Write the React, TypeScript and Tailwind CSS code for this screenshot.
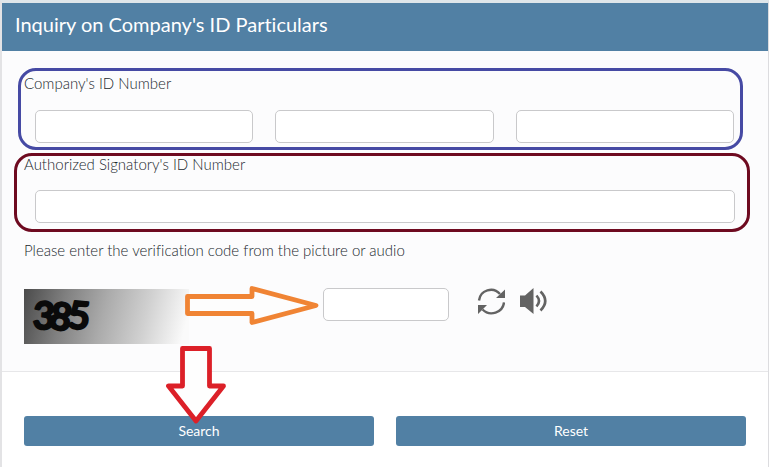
const inputClass = 'block h-[33px] w-full min-w-0 rounded-[5px] border border-[#c9c9cb] bg-white px-3 text-sm text-[#555b60] outline-none'
const labelClass = 'block text-[15px] font-light leading-5 text-[#22282d]'
const buttonClass = 'h-[30px] flex-1 rounded-[3px] bg-[#5180a4] pb-px text-sm leading-5 text-white cursor-pointer'

function CaptchaImage() {
  return (
    <svg viewBox="0 0 165 56" className="h-14 w-[165px] shrink-0" role="img" aria-label="Verification code">
      <defs>
        <linearGradient id="shade" gradientUnits="userSpaceOnUse" x1="0" y1="4" x2="160" y2="44">
          <stop offset="0" stopColor="#4c4c4c" />
          <stop offset="0.25" stopColor="#808080" />
          <stop offset="0.5" stopColor="#ababab" />
          <stop offset="0.75" stopColor="#d0d0d0" />
          <stop offset="1" stopColor="#fafafa" />
        </linearGradient>
      </defs>
      <rect y="1" width="165" height="55" fill="url(#shade)" />
      <g fontFamily="Lato, sans-serif" fontWeight="700" fontSize="38" stroke="#0a0a0a" strokeWidth="2" strokeLinejoin="round" fill="#0a0a0a">
        <text x="9" y="41" transform="rotate(3 19 28)">3</text>
        <text x="26" y="42" transform="rotate(12 37 28)">8</text>
        <text x="44" y="41" transform="rotate(5 55 28)">5</text>
      </g>
    </svg>
  )
}

function RefreshIcon() {
  return (
    <svg viewBox="0 0 28 28" className="size-7" aria-hidden="true">
      <path d="M2 12.5A12 12 0 0 1 23 6M27 14.5A12.500 12 0 0 1 5.500 21.5" fill="none" stroke="#636363" strokeWidth="2.4" />
      <path d="M28 1.500v8.500h-9zM1 26v-9h9z" fill="#636363" />
    </svg>
  )
}

function SpeakerIcon() {
  return (
    <svg viewBox="0 0 28 28" className="size-7" aria-hidden="true">
      <path d="M0 7.500h5L13.500 0v26L5 19H0z" fill="#636363" />
      <path d="M16.500 7.500Q21.500 13 16.500 18.500M20.500 3.500Q30 13 20.500 22.500" fill="none" stroke="#636363" strokeWidth="2.6" />
    </svg>
  )
}

export default function App() {
  return (
    <main className="relative min-h-screen border-t-[3px] border-r border-l-2 border-t-[#dfe6ea] border-r-[#dcdcdf] border-l-[#e3e3e5] bg-white font-[Lato,'Noto_Sans',sans-serif] [font-variant-ligatures:none]">
      <header className="flex h-12 items-center bg-[#5180a4] px-[13px] pb-1.5">
        <h1 className="text-xl leading-7 text-white">Inquiry on Company's ID Particulars</h1>
      </header>

      <form onSubmit={(e) => e.preventDefault()}>
        <div className="border-b border-[#e7e7e9] bg-[#fcfcfd] pt-[17px] pb-[27px]">
          <div role="group" aria-labelledby="company-id" className="mr-[25px] ml-4 rounded-[18px] border-[3px] border-[#464aa4] pt-0.5 pr-1.5 pb-1 pl-[3px]">
            <span id="company-id" className={labelClass}>Company's ID Number</span>
            <div className="mt-[17px] ml-[11px] grid grid-cols-3 gap-[22px]">
              <input type="text" aria-label="Company's ID Number, part 1" className={inputClass} />
              <input type="text" aria-label="Company's ID Number, part 2" className={inputClass} />
              <input type="text" aria-label="Company's ID Number, part 3" className={inputClass} />
            </div>
          </div>

          <div className="mt-[3px] mr-[18px] ml-3 rounded-[18px] border-[3px] border-[#6e0a20] pr-3 pb-1.5 pl-[7px]">
            <label htmlFor="signatory" className="block text-[15px] leading-4 font-light text-[#22282d]">Authorized Signatory's ID Number</label>
            <div className="mt-[18px] ml-[11px]">
              <input id="signatory" type="text" className={inputClass} />
            </div>
          </div>

          <div className="mt-2 px-[22px]">
            <label htmlFor="code" className={labelClass}>Please enter the verification code from the picture or audio</label>
            <div className="relative mt-7 flex items-start">
              <CaptchaImage />
              <input id="code" type="text" className="ml-[134px] h-[33px] w-[126px] rounded-[5px] border border-[#c9c9cb] bg-white px-3 text-sm text-[#555b60] outline-none" />
              <button type="button" aria-label="Refresh code" className="ml-7 cursor-pointer"><RefreshIcon /></button>
              <button type="button" aria-label="Play audio" className="ml-[15px] cursor-pointer"><SpeakerIcon /></button>
              <svg viewBox="0 0 136 42" className="pointer-events-none absolute -top-1 left-40 h-[42px] w-[136px]" aria-hidden="true">
                <path d="M3.500 12.500H68V4.500L132 21.500 68 38.500V29.500H3.500z" fill="#fdfdfd" stroke="#f08434" strokeWidth="4.8" strokeLinejoin="round" />
              </svg>
            </div>
          </div>
        </div>

        <div className="relative flex gap-[22px] px-[22px] pt-11 pb-5">
          <button type="submit" className={buttonClass}>Search</button>
          <button type="reset" className={buttonClass}>Reset</button>
          <svg viewBox="0 0 62 80" className="pointer-events-none absolute -top-7 left-[163px] h-20 w-[62px]" aria-hidden="true">
            <path d="M17.500 4.500H44.500V42H58.500L31 77 3.500 42H17.500z" fill="#fefefe" stroke="#dc2028" strokeWidth="4.8" strokeLinejoin="round" />
          </svg>
        </div>
      </form>
    </main>
  )
}
